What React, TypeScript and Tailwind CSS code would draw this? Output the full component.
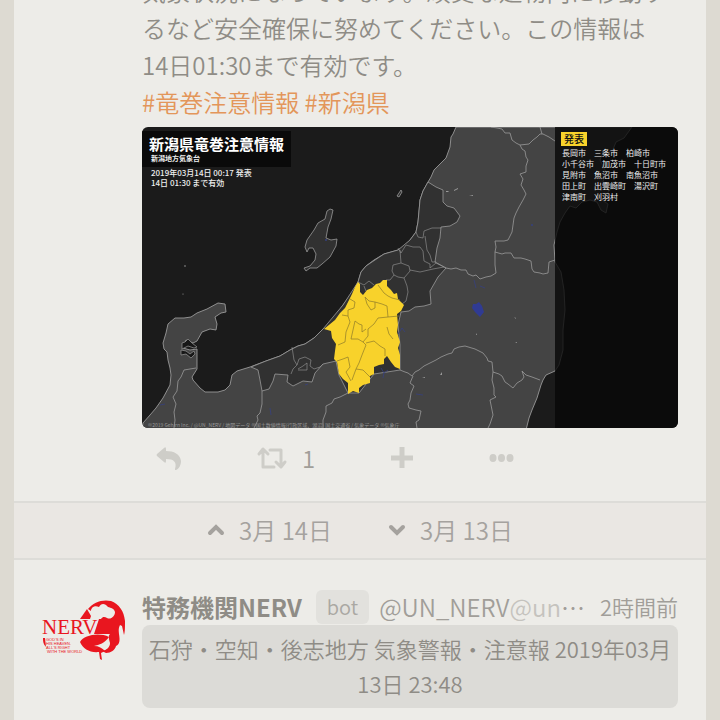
import React from "react";

const border = { fill: "none", stroke: "#9a9a9a", strokeWidth: 0.8, strokeLinejoin: "round" as const };

const LAND =
  "M456 127 L453 134 451 137 450 147 446 158 440 164 434 170 431 177 428 182 423 191 420 200 419 212 418 222 416 232 410 240 403 247 398 250 391 252 384 254 374 260 366 266 361 272 358 282 352 293 343 305 333 319 323 329 314 338 305 344 298 346 290 350 280 356 266 361 250 367 237 371 232 375 230 385 225 390 218 392 205 392 200 388 193 380 192 377 197 369 197 355 197 349 190 350 183 348 186 340 193 343 197 341 202 332 210 329 216 330 217 324 215 317 221 313 226 312 225 304 218 303 207 309 197 313 191 317 184 318 175 318 168 324 166 333 163 343 164 349 167 352 168 360 170 368 171 375 170 385 163 398 156 408 150 415 143 423 142 430 526 430 529 418 532 410 537 398 541 385 543 380 546 375 555 371 559 365 563 350 563 330 565 310 564 290 561 272 555 262 554 245 557 232 560 222 565 213 570 206 576 208 582 202 590 200 597 202 601 210 606 213 608 204 602 200 610 190 603 182 606 172 600 160 604 150 612 152 616 142 624 138 632 127 Z";

const NIIGATA =
  "M428 182 L436 187 443 190 443 202 447 206 454 208 460 216 457 222 450 226 441 227 440 238 437 248 435 262 446 268 438 277 430 291 431 304 424 306 415 307 409 311 401 312 398 325 400 345 400 370 374 374 359 393 348 393 339 375 336 361 323 364 315 373 312 382 303 381 293 386 287 382 288 375 275 374 273 381 269 389 262 391 260 380 258 370 251 367 266 361 280 356 290 350 298 346 305 344 314 338 323 329 343 305 358 282 361 272 366 266 384 254 398 250 410 240 416 232 418 222 420 200 423 191 Z";

const WARNING =
  "M358 282 L360 284 360 292 363 295 367 290 372 288 376 284 380 283 383 280 387 280 387 286 391 290 394 294 397 293 398 299 401 302 404 305 401 311 397 314 398 325 397 332 400 342 398 348 400 355 400 369 395 367 391 362 387 356 384 359 384 364 379 365 374 367 374 374 370 376 370 383 363 385 359 388 359 393 353 391 348 394 348 383 343 379 339 374 337 362 334 359 335 351 336 344 332 338 331 331 324 329 335 320 340 313 345 308 352 294 355 287 Z";

const CITIES = [
  "長岡市　三条市　柏崎市",
  "小千谷市　加茂市　十日町市",
  "見附市　魚沼市　南魚沼市",
  "田上町　出雲崎町　湯沢町",
  "津南町　刈羽村",
];

function WarningMap() {
  return (
    <svg
      viewBox="142 127 536 301"
      role="img"
      aria-label="新潟県竜巻注意情報"
      className="mt-[7px] block w-full rounded-md bg-[#1b1b1b] font-['Noto_Sans_CJK_JP',sans-serif]"
    >
      <path d={LAND} fill="#444444" stroke="#9a9a9a" strokeWidth="0.9" />
      <path d={NIIGATA} fill="#313131" stroke="#9a9a9a" strokeWidth="0.8" />
      <path
        d="M330 209 L333 210 331 219 328 227 326 238 331 240 337 239 336 246 330 257 322 264 317 268 310 268 306 271 304 268 310 266 315 260 316 254 313 248 309 248 307 252 305 247 307 240 314 230 318 223 325 219 327 211 Z"
        fill="#313131" stroke="#9a9a9a" strokeWidth="0.8"
      />
      <path d="M401 190 L402 192 399 197 397 196 Z" fill="#313131" stroke="#9a9a9a" strokeWidth="0.8" />
      <path d="M182 343 L185 342 188 339 192 343 197 347 194 348 188 346 182 349 Z M181 350 L186 351 190 354 194 351 195 354 191 358 186 354 181 355 Z" fill="#171717" stroke="#9a9a9a" strokeWidth="0.7" />

      {/* prefectural borders */}
      <g {...border}>
        <path d="M491 127 L497 128 502 129 505 133 510 133 512 140 516 143 520 145 522 149 525 151 526 157 528 160 526 166 526 172 520 174 523 179 521 185 524 190 526 194 523 200 519 207 516 213 514 218 513 225 512 232 508 240 504 241 495 241 496 247 495 252 495 265 496 273 491 276 486 277 480 279 476 275 473 276 468 274 466 270 461 270 456 268 451 269 446 268" />
        <path d="M520 145 L529 144 533 140 537 137 540 134 543 134 549 137 555 141" />
        <path d="M542 134 L540 127" />
        <path d="M495 252 L502 254 505 253 511 253 514 258 521 258 525 259 531 261 532 269 534 272 540 273 543 274 548 273 549 262 555 260" />
        <path d="M400 370 L405 372 408 373 412 376 415 372 419 370 424 366 430 363 436 360 441 357 448 354 452 353 454 349 459 347 465 346 475 349 483 353 487 358 488 361 492 362 493 372 492 380 494 388 494 395 496 397 490 400 493 415 490 424 488 428" />
        <path d="M493 372 L499 374 502 376 505 382 508 384 513 388 517 383 522 380 524 377 522 371 526 375 532 377 540 380" />
        <path d="M413 376 L410 383 414 386 411 393 410 400 408 404 409 408 416 410 421 411 419 420 416 422 417 428" />
        <path d="M348 393 L340 397 334 399 332 403 326 406 326 412 323 420 323 428" />
        <path d="M262 391 L262 404 260 413 257 416 258 420 254 428" />
        <path d="M196 368 L190 369 184 370 181 377 178 381 177 391 173 397 176 404 174 412 175 420 174 428" />
      </g>

      {/* municipal borders */}
      <g {...border} strokeWidth="0.6">
        <path d="M416 232 L418 237 423 238 424 231 432 228 441 228 M425 236 L427 250 430 255 432 262 436 262" />
        <path d="M398 248 L401 253 406 245 413 247 420 247 423 251 424 261 430 264 430 268 436 263 446 268" />
        <path d="M400 250 L401 263 393 265 392 271 394 275 390 280 386 280 M401 263 L409 266 410 271 404 278 398 277 394 275 M410 270 L420 272 433 269 444 267" />
        <path d="M404 278 L407 286 408 292 406 301 402 304" />
        <path d="M358 282 L364 285 369 281 374 285 M364 286 L366 291" />
        <path d="M292 347 L294 360 297 365 299 359 305 357 311 360 310 366 314 369 320 367 323 364 M298 369 L303 366 307 363 307 370 298 370 M291 374 L293 369 297 365" />
      </g>

      <path d={WARNING} fill="#f8d22b" />
      <g fill="none" stroke="#8d7a2a" strokeWidth="0.7" strokeLinejoin="round">
        <path d="M350 299 L355 302 354 308 348 310 348 316 342 315 M348 316 L350 322 346 332 345 342 338 345" />
        <path d="M365 297 L369 301 375 302 375 308 371 310 367 304 Z M375 302 L382 304 387 306 388 317 399 316 M388 317 L378 318 374 324 368 329 368 336 363 342" />
        <path d="M378 285 L384 293 388 296 392 298 400 300" />
        <path d="M351 339 L355 321 359 324 362 325 362 332 366 329 M351 339 L358 339 363 342 366 345 362 355 359 363 356 369 352 380" />
        <path d="M366 343 L374 341 380 346 385 349 385 356" />
        <path d="M337 361 L343 359 348 357 350 367 346 372 351 381 M356 369 L363 370 370 377 M387 327 L389 334 393 339" />
      </g>

      {/* lakes */}
      <path d="M473 304 L476 304 479 302 482 306 484 312 480 317 475 312 472 308 Z" fill="#303b93" />
      <g fill="#36407f">
        <circle cx="532" cy="225" r="1" />
        <circle cx="326" cy="240" r="1" />
      </g>
      <g fill="none" stroke="#36407f" strokeWidth="0.8">
        <path d="M474 280 L475 284 476 288 M480 286 L485 288 M398 334 L402 328 405 332 M381 368 L384 373 388 370 M384 373 L383 378 M416 394 L423 395 M160 405 L165 404 M270 408 L271 415 M305 385 L308 384" />
      </g>
      <g fill="#9a9a9a">
        <circle cx="185" cy="266" r="0.8" />
        <circle cx="183" cy="294" r="0.6" />
        <path d="M446 191 h3 l-1 1 h-2z M454 190 l4 -2 v1 l-4 2z M469 196 l4 -1 v1z M514 317 l2 1 v1z M515 342 h2 v1z M440 375 l2 -3 v3z M476 335 l1 -2 v2z M422 378 l3 -1 v1z" />
      </g>

      {/* header panel */}
      <rect x="142" y="131" width="149" height="36" fill="#0a0a0a" />
      <text x="149" y="150" fontSize="15" fontWeight="700" fill="#ffffff">新潟県竜巻注意情報</text>
      <text x="151" y="161" fontSize="7" fontWeight="700" fill="#eeeeee">新潟地方気象台</text>
      <text x="151" y="176" fontSize="8" fontWeight="500" fill="#eeeeee">2019年03月14日 00:17 発表</text>
      <text x="151" y="186" fontSize="8" fontWeight="500" fill="#eeeeee">14日 01:30 まで有効</text>

      {/* affected municipalities */}
      <rect x="555" y="127" width="123" height="301" fill="#080808" fillOpacity="0.8" />
      <rect x="561" y="132" width="26" height="14" fill="#f8d22b" />
      <text x="564" y="143" fontSize="10" fontWeight="500" fill="#111111">発表</text>
      {CITIES.map((line, i) => (
        <text key={line} x="562" y={156 + i * 11} fontSize="8" fill="#eeeeee">
          {line}
        </text>
      ))}
      <text x="148" y="427" fontSize="5" fill="#9a9a9a">
        ©2019 Gehirn Inc. / @UN_NERV / 地図データ ©国土数値情報(行政区域、湖沼) 国土交通省 / 気象データ ©気象庁
      </text>
    </svg>
  );
}

function NervLogo() {
  return (
    <svg viewBox="42 599 84 64" className="mt-2.5 block h-16 w-[84px]" role="img" aria-label="特務機関NERV" fill="#e9161f">
      {/* globe */}
      <path d="M111 601 C119 604 124 611 125 621 C125 628 125 632 124 635 L122 626 L120 625 C118 629 119 632 119 634 C120 640 120 644 116 646 C115 650 111 653 106 653 L102 651 C107 650 110 647 110 643 C109 639 108 636 110 634 L94 634 L99 619 L101 619 C103 616 105 617 107 618 C111 620 115 616 115 612 C114 608 111 608 108 607 C105 603 101 603 99 607 C94 605 91 608 91 611 L88 609 C93 602 103 599 111 601 Z" />
      <path d="M87 609 L91 616 L90 619 L80 619 Z" />
      {/* leaf */}
      <path d="M80 642 C84 635 99 632 109 637 C105 643 99 645 94 646 C99 646 102 648 105 651 L101 653 L102 660 L100 659 L99 652 C90 653 83 649 80 642 Z" />
      <path d="M43 638 C43 641 43 644 46 647 L45 638 Z" />
      <text
        x="42" y="634" fontSize="21" fontFamily="Liberation Serif, serif"
        stroke="#edece8" strokeWidth="1" paintOrder="stroke"
      >
        NERV
      </text>
      <g fontFamily="Liberation Sans, sans-serif" fontSize="4">
        <text x="46" y="641">GOD'S IN</text>
        <text x="46" y="645">HIS HEAVEN.</text>
        <text x="46" y="649">ALL'S RIGHT</text>
        <text x="47" y="653">WITH THE WORLD</text>
      </g>
    </svg>
  );
}

function Chevron({ down = false }: { down?: boolean }) {
  return (
    <svg viewBox="0 0 18 14" className="h-3.5 w-[18px]" fill="none" stroke="currentColor" strokeWidth="4" strokeLinecap="round" aria-hidden="true">
      <path d={down ? "M3 4 L9 10 L15 4" : "M3 10 L9 4 L15 10"} />
    </svg>
  );
}

export default function App() {
  return (
    <div className="h-screen overflow-hidden bg-[#dddad2] px-3.5 font-['Noto_Sans_CJK_JP','Noto_Sans',sans-serif] text-[#8f8c86]">
      <main className="h-full overflow-hidden bg-[#edece8]">
        <article className="pr-7 pl-32">
          <p className="-mt-7 text-2xl leading-[37px] font-[350] slashed-zero">
            気象状況になっています。頑丈な建物内に移動す
            <br />
            るなど安全確保に努めてください。この情報は
            <br />
            14日01:30まで有効です。
            <br />
            <a href="#tornado" className="text-[#e3965a]">#竜巻注意情報</a>{" "}
            <a href="#niigata" className="text-[#e3965a]">#新潟県</a>
          </p>
          <WarningMap />
          <div className="flex h-[73px] items-start pt-3 pl-3 text-[#cecdc8]">
            <button type="button" aria-label="返信" className="flex h-9 w-[102px] items-center">
              <svg viewBox="0 0 28 28" className="size-7" fill="currentColor" aria-hidden="true">
                <path d="M3 10 L10 4 Q12 2 12 5 V7 C20 7 26 10 27 17 C27 21 25 25 22 26 C21 26 21 26 21 25 C23 18 20 15 12 15 V17 Q12 20 10 18 L3 12 Q2 11 3 10 Z" />
              </svg>
            </button>
            <button type="button" aria-label="ブースト" className="flex h-9 w-[135px] items-center gap-3.5">
              <svg viewBox="0 0 32 26" className="h-[26px] w-8" fill="none" stroke="currentColor" strokeWidth="3" strokeLinecap="round" strokeLinejoin="round" aria-hidden="true">
                <path d="M3 9 L7 4 L12 9 M7 5 V22 H18 M14 5 H25 V21 M20 17 L25 22 L29 17" />
              </svg>
              <span className="text-2xl font-[350] text-[#a19e99]">1</span>
            </button>
            <button type="button" aria-label="お気に入り" className="flex h-9 w-[98px] items-center">
              <svg viewBox="0 0 22 28" className="h-7 w-[22px]" fill="none" stroke="currentColor" strokeWidth="5" aria-hidden="true">
                <path d="M11 3 V24 M0 14 H22" />
              </svg>
            </button>
            <button type="button" aria-label="もっと" className="flex h-9 items-center">
              <svg viewBox="0 0 26 10" className="h-2.5 w-[26px]" fill="currentColor" aria-hidden="true">
                <ellipse cx="4" cy="5" rx="3.5" ry="4" />
                <ellipse cx="12.5" cy="5" rx="3.5" ry="4" />
                <ellipse cx="21" cy="5" rx="3.5" ry="4" />
              </svg>
            </button>
          </div>
        </article>

        <nav className="flex h-[59px] items-center justify-center gap-14 border-y-2 border-[#dddcd8] bg-[#eae7e3] pb-0.5 text-2xl font-[350] text-[#a5a29e]">
          <button type="button" className="flex items-center gap-3.5">
            <Chevron />
            3月 14日
          </button>
          <button type="button" className="flex items-center gap-3.5">
            <Chevron down />
            3月 13日
          </button>
        </nav>

        <article className="flex gap-4 px-7 pt-[29px]">
          <div className="shrink-0">
            <NervLogo />
          </div>
          <div className="min-w-0 flex-1">
            <header className="flex h-9 items-center text-2xl font-[350]">
              <strong className="shrink-0 font-bold">特務機関NERV</strong>
              <span className="mr-2.5 ml-3.5 flex h-[34px] shrink-0 items-center rounded-md bg-[#e2e1dd] px-[11px] text-xl text-[#aaa8a3]">bot</span>
              <span className="min-w-0 flex-1 truncate text-[#a19e99]">
                @UN_NERV<span className="text-[#c5c3be]">@unnerv.jp</span>
              </span>
              <time className="ml-3 shrink-0 text-[22px] text-[#a19e99]">2時間前</time>
            </header>
            <p className="rounded-lg bg-[#dcdbd7] px-1.5 pt-1.5 pb-[7px] text-center text-[22px] leading-[35px] font-[350] slashed-zero">
              石狩・空知・後志地方 気象警報・注意報 2019年03月13日 23:48
            </p>
          </div>
        </article>
      </main>
    </div>
  );
}
